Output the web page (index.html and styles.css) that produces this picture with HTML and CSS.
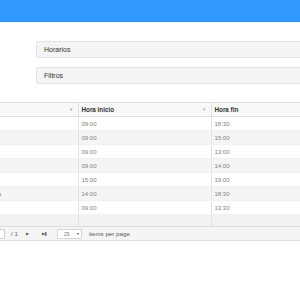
FILE: index.html
```html
<!DOCTYPE html>
<html lang="es">
<head>
<meta charset="utf-8">
<link rel="stylesheet" href="styles.css">
</head>
<body>
<div class="topbar"></div>
<div class="main">
  <div class="panel">Horarios</div>
  <div class="panel">Filtros</div>
  <div class="grid">
    <table class="gtable">
      <colgroup><col class="c1"><col class="c2"><col class="c3"></colgroup>
      <thead>
        <tr>
          <th class="hcell hfirst"><span class="htext">Nombre</span><span class="sort">&#9662;</span></th>
          <th class="hcell"><span class="htext">Hora inicio</span><span class="sort">&#9662;</span></th>
          <th class="hcell"><span class="htext">Hora fin</span></th>
        </tr>
      </thead>
      <tbody>
        <tr><td>General</td><td>09:00</td><td>18:30</td></tr>
        <tr class="alt"><td>Mañana</td><td>09:00</td><td>15:00</td></tr>
        <tr><td>Reducido</td><td>09:00</td><td>13:00</td></tr>
        <tr class="alt"><td>Intensivo</td><td>09:00</td><td>14:00</td></tr>
        <tr><td>Tarde</td><td>15:00</td><td>19:00</td></tr>
        <tr class="alt"><td>Horario de tarde extendida</td><td>14:00</td><td>18:30</td></tr>
        <tr><td>Sábado</td><td>09:00</td><td>13:30</td></tr>
        <tr class="filler"><td></td><td></td><td></td></tr>
      </tbody>
    </table>
    <div class="pager">
      <span class="pinput">1</span>
      <span class="ptotal">/ 1</span>
      <span class="pbtn">&#9654;</span>
      <span class="pbtn plast">&#9654;&#10074;</span>
      <span class="psel"><span>25</span><span class="parrow">&#9662;</span></span>
      <span class="plabel">items per page</span>
    </div>
  </div>
</div>
</body>
</html>
```
FILE: styles.css
```css
html, body {
  margin: 0;
  padding: 0;
  background: #ffffff;
  overflow: hidden;
}
body {
  font-family: "Liberation Sans", Arial, sans-serif;
  color: #333;
}
.topbar {
  height: 22px;
  background: #3399ff;
  border-bottom: 1px solid #e8f3fe;
}
.main {
  padding-top: 18px;
}
.panel {
  margin-left: 36px;
  margin-right: -10px;
  height: 17px;
  box-sizing: border-box;
  border: 1px solid #e4e4e4;
  border-radius: 2px;
  background: #f4f4f4;
  font-size: 7px;
  line-height: 15px;
  padding-left: 7px;
  color: #333;
}
.panel + .panel {
  margin-top: 9px;
}
.grid {
  margin-top: 18px;
  margin-left: -73px;
  width: 423px;
}
.gtable {
  border-collapse: collapse;
  table-layout: fixed;
  width: 100%;
  border-top: 1px solid #dcdcdc;
}
.c1 { width: 151px; }
.c2 { width: 133px; }
.hcell {
  height: 13px;
  padding: 0 3px;
  text-align: left;
  font-size: 6.3px;
  font-weight: bold;
  color: #333;
  background: #f8f8f8;
  border-bottom: 1px solid #dcdcdc;
  border-right: 1px solid #e2e2e2;
  position: relative;
}
.hfirst .htext { visibility: hidden; }
.sort {
  position: absolute;
  right: 5px;
  top: 3px;
  font-size: 5px;
  font-weight: normal;
  color: #aaa;
}
td {
  height: 13px;
  padding: 0 3px;
  font-size: 6px;
  color: #808080;
  border-right: 1px solid #e2e2e2;
  border-bottom: 1px solid #f0f0f0;
  white-space: nowrap;
  overflow: hidden;
}
tr.alt td {
  background: #f5f5f5;
}
tr.filler td {
  height: 11px;
  background: #f2f2f2;
  border-bottom: none;
}
.pager {
  height: 15px;
  box-sizing: border-box;
  border-top: 1px solid #dcdcdc;
  border-bottom: 1px solid #dcdcdc;
  background: #f5f5f5;
  display: flex;
  align-items: center;
  font-size: 6.2px;
  color: #555;
  padding-left: 68px;
}
.pinput {
  width: 10px;
  height: 10px;
  box-sizing: border-box;
  border: 1px solid #d0d0d0;
  background: #fff;
  color: #fff;
  line-height: 8px;
  text-align: center;
}
.ptotal {
  margin-left: 6px;
  color: #666;
}
.pbtn {
  margin-left: 8px;
  font-size: 4px;
  color: #555;
}
.plast {
  margin-left: 13px;
  letter-spacing: -1px;
}
.psel {
  margin-left: 11px;
  width: 25px;
  height: 10px;
  box-sizing: border-box;
  border: 1px solid #d6d6d6;
  background: #fff;
  display: flex;
  align-items: center;
  justify-content: space-between;
  padding: 0 2px 0 6px;
  color: #777;
  font-size: 5px;
}
.parrow {
  font-size: 4px;
  color: #555;
}
.plabel {
  margin-left: 7px;
  color: #555;
}
```
